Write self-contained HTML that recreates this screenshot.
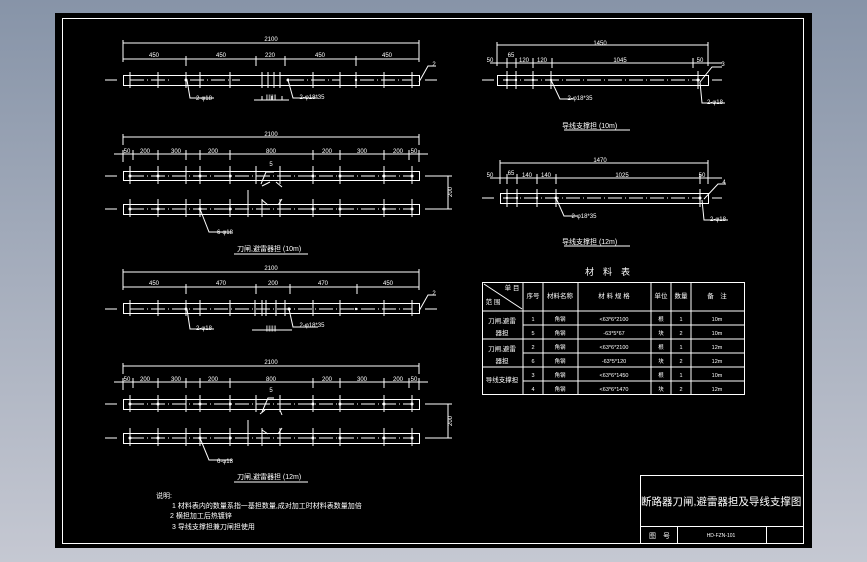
<!DOCTYPE html>
<html><head><meta charset="utf-8"><style>
html,body{margin:0;padding:0;}
body{width:867px;height:562px;overflow:hidden;background:linear-gradient(#8794a8,#c5c8d2);position:relative;}
svg{position:absolute;left:0;top:0;}
text{fill:#fff;font-family:"Liberation Sans","WenQuanYi Zen Hei","Noto Sans CJK SC",sans-serif;}
</style></head><body>
<svg width="867" height="562" viewBox="0 0 867 562">
<rect x="55" y="13" width="757" height="535" fill="#000"/>
<rect x="62.5" y="18.5" width="741" height="525" fill="none" stroke="#fff" stroke-width="1"/>
<g stroke="#fff" stroke-width="1" fill="none">
<!-- View 1 -->
<path d="M123 43H419M123 40V62M419 40V62M123 59H419M186 56V66M256 56V66M285 56V66M356 56V66"/>
<rect x="123.5" y="75.5" width="296" height="10"/>
<path d="M105 80H117M425 80H437M130 80H170M190 80H240M290 80H340M360 80H412" stroke-dasharray="14 3 1 3"/>
<path d="M130 72V88M158 72V88M186 72V88M200 72V88M230 72V88M262 72V88M268 72V88M274 72V88M280 72V88M313 72V88M340 72V88M356 72V88M384 72V88M412 72V88"/>
<path d="M187 80L190 98H214M288 80L293 98H318M419 82L428 66H436M254 100H289M262 96V100M272 96V100M282 96V100"/>
<!-- View 2 -->
<path d="M123 137H419M123 134V145M419 134V145M114 154H428M123 150V162M133 150V160M158 150V160M186 150V160M200 150V160M230 150V160M313 150V160M340 150V160M384 150V160M409 150V160M419 150V162"/>
<rect x="123.5" y="171.5" width="296" height="9"/>
<rect x="123.5" y="204.5" width="296" height="10"/>
<path d="M105 176H117M425 176H437M105 209H117M425 209H437M130 176H412M130 209H412" stroke-dasharray="14 3 1 3"/>
<path d="M130 166V184M158 166V184M186 166V184M200 166V184M230 166V184M256 166V184M280 166V184M313 166V184M340 166V184M384 166V184M412 166V184"/>
<path d="M130 199V217M158 199V217M186 199V217M200 199V217M230 199V217M248 199V217M262 199V217M280 199V217M313 199V217M340 199V217M384 199V217M412 199V217"/>
<path d="M425 176H452M425 209H452M448 176V209M261 184L266 172H274M262 186L270 182M276 182L282 187M248 190V199M262 200L268 205M278 205L282 199M200 209L209 232H232"/>
<path d="M234 254H308"/>
<!-- View 3 -->
<path d="M123 272H419M123 269V290M419 269V290M123 287H419M186 284V294M256 284V294M290 284V294M357 284V294"/>
<rect x="123.5" y="303.5" width="296" height="10"/>
<path d="M105 309H117M425 309H437M130 309H412" stroke-dasharray="14 3 1 3"/>
<path d="M130 300V316M158 300V316M186 300V316M200 300V316M230 300V316M255 300V316M262 300V316M266 300V316M276 300V316M285 300V316M313 300V316M340 300V316M384 300V316M412 300V316"/>
<path d="M187 309L190 329H214M289 309L293 327H318M419 311L428 295H436M252 330H292"/>
<!-- View 4 -->
<path d="M123 366H419M123 363V374M419 363V374M114 382H428M123 378V390M133 378V388M158 378V388M186 378V388M200 378V388M230 378V388M313 378V388M340 378V388M384 378V388M409 378V388M419 378V390"/>
<rect x="123.5" y="399.5" width="296" height="10"/>
<rect x="123.5" y="433.5" width="296" height="10"/>
<path d="M105 404H117M425 404H437M105 438H117M425 438H437M130 404H412M130 438H412" stroke-dasharray="14 3 1 3"/>
<path d="M130 395V412M158 395V412M186 395V412M200 395V412M230 395V412M256 395V412M280 395V412M313 395V412M340 395V412M384 395V412M412 395V412"/>
<path d="M130 428V446M158 428V446M186 428V446M200 428V446M230 428V446M248 428V446M262 428V446M280 428V446M313 428V446M340 428V446M384 428V446M412 428V446"/>
<path d="M425 404H452M425 438H452M448 404V438M262 412L268 398H274M260 414L265 410M280 410L282 415M248 420V432M262 430L268 434M278 434L282 428M200 438L209 460H232"/>
<path d="M234 482H308"/>
<!-- Right view 1 -->
<path d="M497 45H708M497 42V66M708 42V66M490 63H722M507 58V68M516 58V68M533 58V68M552 58V68M693 58V68"/>
<rect x="497.5" y="75.5" width="211" height="10"/>
<path d="M482 80H494M712 80H722M503 80H700" stroke-dasharray="14 3 1 3"/>
<path d="M507 71V89M516 71V89M533 71V89M551 71V89M698 71V89"/>
<path d="M551 80L560 99H573M700 82L712 67H722M700 82L702 103H725"/>
<path d="M564 130H630"/>
<!-- Right view 2 -->
<path d="M500 163H708M500 160V184M708 160V184M490 178H722M507 174V184M517 174V184M537 174V184M556 174V184M700 174V184"/>
<rect x="500.5" y="193.5" width="208" height="10"/>
<path d="M482 198H494M712 198H722M503 198H700" stroke-dasharray="14 3 1 3"/>
<path d="M507 189V207M517 189V207M537 189V207M556 189V207M700 189V207"/>
<path d="M556 198L564 216H577M704 199L718 184H726M702 200L704 220H728"/>
<path d="M564 246H630"/>
<!-- Table -->
<rect x="482.5" y="282.5" width="262" height="112"/>
<path d="M482 311H744M523 325H744M482 339H744M523 353H744M482 367H744M523 381H744M523 282V394M543 282V394M578 282V394M651 282V394M671 282V394M691 282V394M484 284L522 309"/>
<!-- Title block -->
<path d="M640.5 475V543M640 475.5H803M640 526.5H803M677.5 526V543M766.5 526V543"/>
</g>
<g fill="#fff">
<circle cx="186" cy="80" r="1.5"/><circle cx="288" cy="80" r="1.5"/><circle cx="356" cy="80" r="1.2"/>
<circle cx="130" cy="176" r="1.5"/><circle cx="158" cy="176" r="1.5"/><circle cx="200" cy="176" r="1.5"/><circle cx="230" cy="176" r="1.5"/><circle cx="313" cy="176" r="1.5"/><circle cx="340" cy="176" r="1.5"/><circle cx="384" cy="176" r="1.5"/><circle cx="412" cy="176" r="1.5"/>
<circle cx="130" cy="209" r="1.5"/><circle cx="158" cy="209" r="1.5"/><circle cx="200" cy="209" r="1.5"/><circle cx="230" cy="209" r="1.5"/><circle cx="313" cy="209" r="1.5"/><circle cx="340" cy="209" r="1.5"/><circle cx="384" cy="209" r="1.5"/><circle cx="412" cy="209" r="1.5"/>
<circle cx="186" cy="309" r="1.5"/><circle cx="289" cy="309" r="1.5"/><circle cx="356" cy="309" r="1.2"/>
<circle cx="130" cy="404" r="1.5"/><circle cx="158" cy="404" r="1.5"/><circle cx="200" cy="404" r="1.5"/><circle cx="230" cy="404" r="1.5"/><circle cx="313" cy="404" r="1.5"/><circle cx="340" cy="404" r="1.5"/><circle cx="384" cy="404" r="1.5"/><circle cx="412" cy="404" r="1.5"/>
<circle cx="130" cy="438" r="1.5"/><circle cx="158" cy="438" r="1.5"/><circle cx="200" cy="438" r="1.5"/><circle cx="230" cy="438" r="1.5"/><circle cx="313" cy="438" r="1.5"/><circle cx="340" cy="438" r="1.5"/><circle cx="384" cy="438" r="1.5"/><circle cx="412" cy="438" r="1.5"/>
<circle cx="507" cy="80" r="1.2"/><circle cx="516" cy="80" r="1.2"/><circle cx="533" cy="80" r="1.2"/><circle cx="551" cy="80" r="1.2"/><circle cx="698" cy="80" r="1.5"/>
<circle cx="507" cy="198" r="1.2"/><circle cx="517" cy="198" r="1.2"/><circle cx="537" cy="198" r="1.2"/><circle cx="556" cy="198" r="1.5"/><circle cx="700" cy="198" r="1.5"/>
</g>
<g font-size="6" text-anchor="middle">
<text x="271" y="41">2100</text>
<text x="154" y="57">450</text><text x="221" y="57">450</text><text x="270" y="57">220</text><text x="320" y="57">450</text><text x="387" y="57">450</text>
<text x="434" y="66">2</text>
<text x="204" y="100">2-φ18</text><text x="312" y="99">2-φ18*35</text><text x="271" y="99">|||||||</text>
<text x="271" y="136">2100</text>
<text x="127" y="153">50</text><text x="145" y="153">200</text><text x="176" y="153">300</text><text x="213" y="153">200</text><text x="271" y="153">800</text><text x="327" y="153">200</text><text x="362" y="153">300</text><text x="398" y="153">200</text><text x="414" y="153">50</text>
<text x="271" y="166">5</text>
<text x="225" y="234">6-φ18</text>
<text x="452" y="192" transform="rotate(-90 452 192)">200</text>
<text x="271" y="270">2100</text>
<text x="154" y="285">450</text><text x="221" y="285">470</text><text x="273" y="285">200</text><text x="323" y="285">470</text><text x="388" y="285">450</text>
<text x="434" y="295">2</text>
<text x="204" y="330">2-φ18</text><text x="312" y="327">2-φ18*35</text><text x="271" y="330">|||||||</text>
<text x="271" y="364">2100</text>
<text x="127" y="381">50</text><text x="145" y="381">200</text><text x="176" y="381">300</text><text x="213" y="381">200</text><text x="271" y="381">800</text><text x="327" y="381">200</text><text x="362" y="381">300</text><text x="398" y="381">200</text><text x="414" y="381">50</text>
<text x="271" y="392">5</text>
<text x="225" y="463">6-φ18</text>
<text x="452" y="421" transform="rotate(-90 452 421)">200</text>
<text x="600" y="45">1450</text>
<text x="490" y="62">50</text><text x="511" y="57">65</text><text x="524" y="62">120</text><text x="542" y="62">120</text><text x="620" y="62">1045</text><text x="700" y="62">50</text>
<text x="723" y="66">3</text>
<text x="580" y="100">2-φ18*35</text><text x="715" y="104">2-φ18</text>
<text x="600" y="162">1470</text>
<text x="490" y="177">50</text><text x="511" y="175">65</text><text x="527" y="177">140</text><text x="546" y="177">140</text><text x="622" y="177">1025</text><text x="702" y="177">50</text>
<text x="724" y="184">4</text>
<text x="584" y="218">2-φ18*35</text><text x="718" y="221">2-φ18</text>
</g>
<g font-size="7">
<text x="237" y="251">刀闸,避雷器担 (10m)</text>
<text x="237" y="479">刀闸,避雷器担 (12m)</text>
<text x="562" y="128">导线支撑担 (10m)</text>
<text x="562" y="244">导线支撑担 (12m)</text>
<text x="156" y="498">说明:</text>
<text x="172" y="508">1 材料表内的数量系指一基担数量,成对加工时材料表数量加倍</text>
<text x="170" y="518">2 横担加工后热镀锌</text>
<text x="172" y="529">3 导线支撑担兼刀闸担使用</text>
</g>
<text x="585" y="275" font-size="9">材　料　表</text>
<g font-size="6.5" text-anchor="middle">
<text x="512" y="290">单 目</text><text x="493" y="304">范 围</text>
<text x="533" y="298">序号</text><text x="560" y="298">材料名称</text><text x="614" y="298">材 料 规 格</text><text x="661" y="298">单位</text><text x="681" y="298">数量</text><text x="717" y="298">备　注</text>
<text x="502" y="323">刀闸,避雷</text><text x="502" y="335">器担</text>
<text x="502" y="351">刀闸,避雷</text><text x="502" y="363">器担</text>
<text x="502" y="382">导线支撑担</text>
</g>
<g font-size="5.5" text-anchor="middle">
<text x="533" y="321">1</text><text x="560" y="321">角钢</text><text x="614" y="321">&lt;63*6*2100</text><text x="661" y="321">根</text><text x="681" y="321">1</text><text x="717" y="321">10m</text>
<text x="533" y="335">5</text><text x="560" y="335">角钢</text><text x="614" y="335">-63*5*67</text><text x="661" y="335">块</text><text x="681" y="335">2</text><text x="717" y="335">10m</text>
<text x="533" y="349">2</text><text x="560" y="349">角钢</text><text x="614" y="349">&lt;63*6*2100</text><text x="661" y="349">根</text><text x="681" y="349">1</text><text x="717" y="349">12m</text>
<text x="533" y="363">6</text><text x="560" y="363">角钢</text><text x="614" y="363">-63*5*120</text><text x="661" y="363">块</text><text x="681" y="363">2</text><text x="717" y="363">12m</text>
<text x="533" y="377">3</text><text x="560" y="377">角钢</text><text x="614" y="377">&lt;63*6*1450</text><text x="661" y="377">根</text><text x="681" y="377">1</text><text x="717" y="377">10m</text>
<text x="533" y="391">4</text><text x="560" y="391">角钢</text><text x="614" y="391">&lt;63*6*1470</text><text x="661" y="391">块</text><text x="681" y="391">2</text><text x="717" y="391">12m</text>
</g>
<text x="641" y="505" font-size="10.5">断路器刀闸,避雷器担及导线支撑图</text>
<text x="649" y="538" font-size="7">图　号</text>
<text x="721" y="537" font-size="5" text-anchor="middle">HD-FZN-101</text>
</svg>
</body></html>
